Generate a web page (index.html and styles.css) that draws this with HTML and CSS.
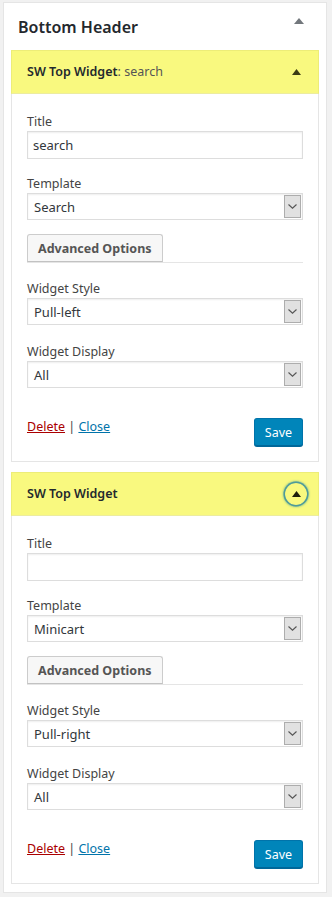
FILE: index.html
```html
<!DOCTYPE html>
<html>
<head>
<meta charset="utf-8">
<link rel="stylesheet" href="styles.css">
</head>
<body>
<div class="sidebar">
  <div class="sidebar-head">
    <h2>Bottom Header</h2>
    <span class="head-arrow"><svg width="10" height="6" viewBox="0 0 10 6"><path d="M0 6 L5 0 L10 6 Z" fill="#72777c"/></svg></span>
  </div>

  <div class="widget">
    <div class="widget-top">
      <h3>SW Top Widget<span class="in-title">: search</span></h3>
      <span class="toggle"><svg width="9" height="6" viewBox="0 0 9 6"><path d="M0 6 L4.5 0 L9 6 Z" fill="#3c3c14"/></svg></span>
    </div>
    <div class="widget-inside">
      <div class="field first">
        <label>Title</label>
        <input class="text-input" type="text" value="search">
      </div>
      <div class="field">
        <label>Template</label>
        <div class="select"><span class="select-value">Search</span><span class="select-arrow"><svg width="9" height="5" viewBox="0 0 9 5"><path d="M0.5 0.5 L4.5 4.2 L8.5 0.5" fill="none" stroke="#555" stroke-width="1.1"/></svg></span></div>
      </div>
      <div class="adv-row"><span class="btn">Advanced Options</span></div>
      <div class="field adv-first">
        <label>Widget Style</label>
        <div class="select"><span class="select-value">Pull-left</span><span class="select-arrow"><svg width="9" height="5" viewBox="0 0 9 5"><path d="M0.5 0.5 L4.5 4.2 L8.5 0.5" fill="none" stroke="#555" stroke-width="1.1"/></svg></span></div>
      </div>
      <div class="field adv">
        <label>Widget Display</label>
        <div class="select"><span class="select-value">All</span><span class="select-arrow"><svg width="9" height="5" viewBox="0 0 9 5"><path d="M0.5 0.5 L4.5 4.2 L8.5 0.5" fill="none" stroke="#555" stroke-width="1.1"/></svg></span></div>
      </div>
      <div class="actions">
        <div class="links"><a class="delete" href="#">Delete</a> | <a class="close" href="#">Close</a></div>
        <span class="save">Save</span>
      </div>
    </div>
  </div>

  <div class="widget">
    <div class="widget-top">
      <h3>SW Top Widget</h3>
      <span class="toggle focused"><svg width="9" height="6" viewBox="0 0 9 6"><path d="M0 6 L4.5 0 L9 6 Z" fill="#1e1e0a"/></svg></span>
    </div>
    <div class="widget-inside">
      <div class="field first">
        <label>Title</label>
        <input class="text-input" type="text" value="">
      </div>
      <div class="field">
        <label>Template</label>
        <div class="select"><span class="select-value">Minicart</span><span class="select-arrow"><svg width="9" height="5" viewBox="0 0 9 5"><path d="M0.5 0.5 L4.5 4.2 L8.5 0.5" fill="none" stroke="#555" stroke-width="1.1"/></svg></span></div>
      </div>
      <div class="adv-row"><span class="btn">Advanced Options</span></div>
      <div class="field adv-first">
        <label>Widget Style</label>
        <div class="select"><span class="select-value">Pull-right</span><span class="select-arrow"><svg width="9" height="5" viewBox="0 0 9 5"><path d="M0.5 0.5 L4.5 4.2 L8.5 0.5" fill="none" stroke="#555" stroke-width="1.1"/></svg></span></div>
      </div>
      <div class="field adv">
        <label>Widget Display</label>
        <div class="select"><span class="select-value">All</span><span class="select-arrow"><svg width="9" height="5" viewBox="0 0 9 5"><path d="M0.5 0.5 L4.5 4.2 L8.5 0.5" fill="none" stroke="#555" stroke-width="1.1"/></svg></span></div>
      </div>
      <div class="actions">
        <div class="links"><a class="delete" href="#">Delete</a> | <a class="close" href="#">Close</a></div>
        <span class="save">Save</span>
      </div>
    </div>
  </div>
</div>
</body>
</html>
```

FILE: styles.css
```css
* { box-sizing: border-box; }

html, body {
  margin: 0;
  padding: 0;
  background: #f1f1f1;
  font-family: "Noto Sans", "Open Sans", sans-serif;
  font-size: 13px;
  color: #444;
}

.sidebar {
  margin: 2px 5px 4px 3px;
  background: #fff;
  border: 1px solid #e5e5e5;
  padding: 0 7px 8px;
}

.sidebar-head {
  height: 47px;
  display: flex;
  align-items: center;
  justify-content: space-between;
}

.sidebar-head h2 {
  margin: 0;
  padding-left: 7px;
  padding-top: 1px;
  font-size: 16px;
  font-weight: 600;
  color: #23282d;
  line-height: 24px;
}

.head-arrow {
  align-self: flex-start;
  margin-top: 15px;
  margin-right: 15px;
  display: flex;
}

.widget {
  border: 1px solid #e5e5e5;
  margin-bottom: 10px;
  background: #fff;
}

.widget:last-child { margin-bottom: 0; }

.widget-top {
  height: 44px;
  background: #f9f97f;
  border: 1px solid #eded78;
  border-bottom-color: #ececa0;
  display: flex;
  align-items: center;
  justify-content: space-between;
  padding-left: 15px;
  margin: -1px -1px 0 -1px;
}

.widget-top h3 {
  margin: 0;
  font-size: 12.5px;
  font-weight: 600;
  color: #23282d;
  line-height: 18px;
}

.in-title {
  font-weight: 400;
  color: #555;
}

.toggle {
  width: 22px;
  height: 22px;
  margin-right: 11px;
  display: flex;
  align-items: center;
  justify-content: center;
  border-radius: 50%;
}

.toggle svg { margin-top: -1px; }

.toggle.focused {
  box-shadow: 0 0 0 1.5px #4f9a9a, 0 0 2px 2px rgba(30, 140, 160, 0.5);
}

.widget-inside {
  padding: 19px 15px 15px;
}

.field { margin-top: 16px; }
.field.first { margin-top: 0; }
.field.adv-first { margin-top: 17px; }
.field.adv { margin-top: 18px; }

.field label {
  display: block;
  line-height: 18px;
  font-size: 12.5px;
  color: #444;
}

.text-input {
  display: block;
  width: 100%;
  height: 28px;
  margin: 0;
  border: 1px solid #ddd;
  box-shadow: inset 0 1px 2px rgba(0, 0, 0, 0.07);
  padding: 0 5px;
  font-family: inherit;
  font-size: 13px;
  color: #32373c;
  background: #fff;
  outline: none;
}

.select {
  display: flex;
  align-items: center;
  height: 27px;
  border: 1px solid #ddd;
  box-shadow: inset 0 1px 2px rgba(0, 0, 0, 0.07);
  background: #fff;
  padding: 1px 1px 1px 6px;
}

.select-value {
  flex: 1;
  font-size: 13px;
  color: #32373c;
  line-height: 18px;
}

.select-arrow {
  width: 17px;
  height: 23px;
  background: #e1e1e1;
  border: 1px solid #adadad;
  display: flex;
  align-items: center;
  justify-content: center;
}

.adv-row {
  margin-top: 14px;
  border-bottom: 1px solid #e5e5e5;
  display: flex;
}

.btn {
  display: inline-flex;
  align-items: center;
  height: 28px;
  padding: 0 10px;
  background: #f7f7f7;
  border: 1px solid #ccc;
  border-bottom-color: #c2c2c2;
  border-radius: 3px 3px 0 0;
  font-size: 12.5px;
  font-weight: 700;
  color: #555;
}

.actions {
  margin-top: 30px;
  display: flex;
  justify-content: space-between;
  align-items: flex-start;
}

.links {
  line-height: 18px;
  font-size: 12.5px;
  color: #444;
}

.links a { text-decoration: underline; }
.delete { color: #a00; }
.close { color: #0073aa; }

.save {
  display: inline-flex;
  align-items: center;
  justify-content: center;
  width: 49px;
  height: 28px;
  background: #0085ba;
  border: 1px solid #0073aa;
  border-bottom-color: #006799;
  border-radius: 3px;
  box-shadow: 0 1px 0 #006799;
  color: #fff;
  font-size: 12.5px;
}
```
